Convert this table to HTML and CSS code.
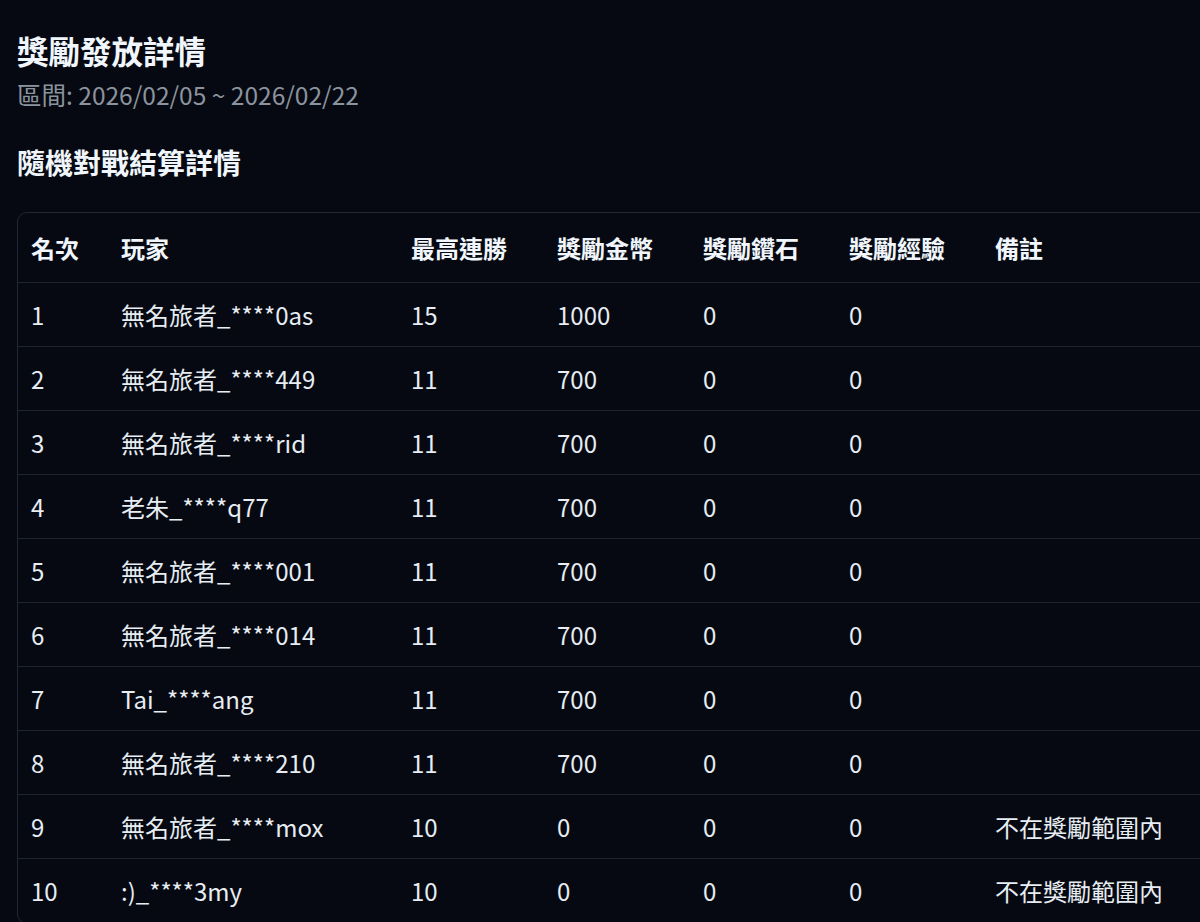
FILE: index.html
```html
<!DOCTYPE html>
<html lang="zh-Hant">
<head>
<meta charset="utf-8">
<title>獎勵發放詳情</title>
<link rel="stylesheet" href="styles.css">
</head>
<body>
<main class="page">
  <header class="page-head">
    <h1 class="title">獎勵發放詳情</h1>
    <p class="range">區間: 2026/02/05 ~ 2026/02/22</p>
  </header>
  <section class="section">
    <h2 class="section-title">隨機對戰結算詳情</h2>
    <div class="table-wrap">
      <table class="result-table">
        <thead>
          <tr>
            <th class="c-rank">名次</th>
            <th class="c-player">玩家</th>
            <th class="c-num">最高連勝</th>
            <th class="c-num">獎勵金幣</th>
            <th class="c-num">獎勵鑽石</th>
            <th class="c-num">獎勵經驗</th>
            <th class="c-note">備註</th>
          </tr>
        </thead>
        <tbody>
          <tr><td>1</td><td>無名旅者_****0as</td><td>15</td><td>1000</td><td>0</td><td>0</td><td></td></tr>
          <tr><td>2</td><td>無名旅者_****449</td><td>11</td><td>700</td><td>0</td><td>0</td><td></td></tr>
          <tr><td>3</td><td>無名旅者_****rid</td><td>11</td><td>700</td><td>0</td><td>0</td><td></td></tr>
          <tr><td>4</td><td>老朱_****q77</td><td>11</td><td>700</td><td>0</td><td>0</td><td></td></tr>
          <tr><td>5</td><td>無名旅者_****001</td><td>11</td><td>700</td><td>0</td><td>0</td><td></td></tr>
          <tr><td>6</td><td>無名旅者_****014</td><td>11</td><td>700</td><td>0</td><td>0</td><td></td></tr>
          <tr><td>7</td><td>Tai_****ang</td><td>11</td><td>700</td><td>0</td><td>0</td><td></td></tr>
          <tr><td>8</td><td>無名旅者_****210</td><td>11</td><td>700</td><td>0</td><td>0</td><td></td></tr>
          <tr><td>9</td><td>無名旅者_****mox</td><td>10</td><td>0</td><td>0</td><td>0</td><td>不在獎勵範圍內</td></tr>
          <tr><td>10</td><td>:)_****3my</td><td>10</td><td>0</td><td>0</td><td>0</td><td>不在獎勵範圍內</td></tr>
        </tbody>
      </table>
    </div>
  </section>
</main>
</body>
</html>
```

FILE: styles.css
```css
html, body {
  margin: 0;
  padding: 0;
  background: #060911;
  overflow: hidden;
}

body {
  font-family: "Noto Sans CJK TC", "Noto Sans", sans-serif;
  color: #e6edf3;
}

.page {
  padding: 30px 0 0 17px;
}

.title {
  margin: 0;
  font-size: 31.5px;
  line-height: 40px;
  font-weight: 700;
  color: #f0f6fc;
}

.range {
  margin: 9px 0 0;
  font-size: 24.5px;
  line-height: 32px;
  color: #8b949e;
}

.section {
  margin-top: 33px;
}

.section-title {
  margin: 0;
  font-size: 28px;
  line-height: 36px;
  font-weight: 700;
  color: #f0f6fc;
}

.table-wrap {
  margin-top: 32px;
  width: 1260px;
  border: 1px solid #222733;
  border-radius: 10px;
  overflow: hidden;
}

.result-table {
  width: 100%;
  table-layout: fixed;
  border-collapse: collapse;
  font-size: 24px;
}

.result-table th,
.result-table td {
  box-sizing: border-box;
  text-align: left;
  padding: 16px 13px;
  line-height: 31px;
  white-space: nowrap;
  border-bottom: 1px solid #1f232d;
}

.result-table th {
  padding-top: 19px;
  padding-bottom: 19px;
  font-weight: 700;
  color: #f0f6fc;
}

.c-rank { width: 90px; }
.c-player { width: 290px; }
.c-num { width: 146px; }
```
